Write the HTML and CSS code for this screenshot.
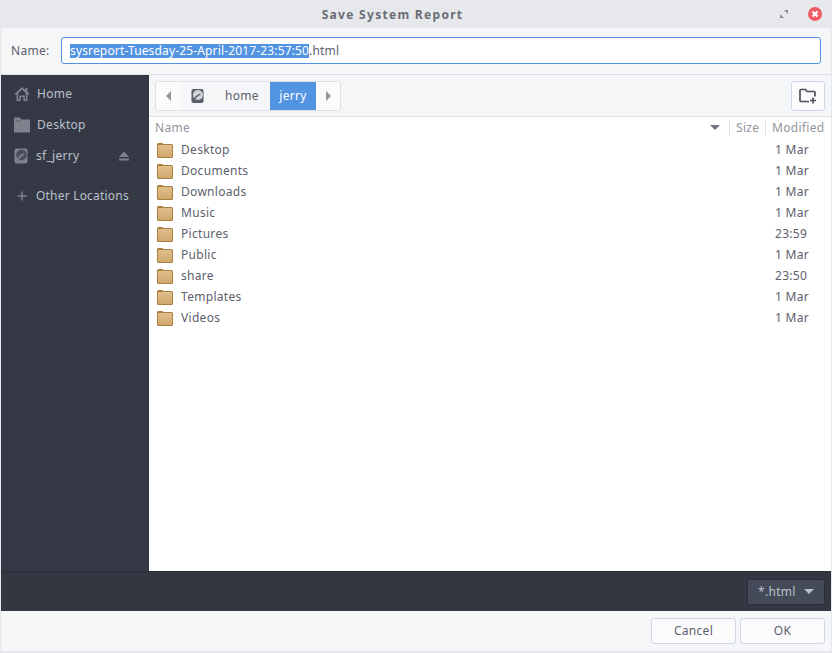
FILE: index.html
```html
<!doctype html>
<html>

<head>
	<meta charset="utf-8">
	<link rel="stylesheet" href="styles.css">
	<title>Save System Report</title>
</head>

<body>
	<svg class="defs" width="0" height="0">
		<linearGradient id="fold" x1="0" y1="0" x2="0" y2="1">
			<stop offset="0" stop-color="#e0bf8c" />
			<stop offset="1" stop-color="#d0a86f" />
		</linearGradient>
		<symbol id="folder" viewBox="0 0 18 18">
			<path d="M1 3.500q0-1.500 1.500-1.500h4l1 1h8q1.500 0 1.500 1.500v11q0 1.500-1.500 1.500h-13q-1.500 0-1.500-1.500z" fill="#a9803f" />
			<rect x="2" y="4" width="14" height="12" rx="1" fill="url(#fold)" />
		</symbol>
		<symbol id="disk" viewBox="0 0 14 16">
			<rect x="0.500" y="0.500" width="13" height="15" rx="2" class="disk-case" />
			<circle cx="7.500" cy="7" r="5.400" class="disk-plate" />
			<path d="M2.500 14.500q1.500-6 7.500-8.500" stroke-width="1.600" fill="none" class="disk-arm" />
		</symbol>
	</svg>
	<div class="window">
		<div class="titlebar">
			<span class="title">Save System Report</span>
			<svg class="restore" width="8" height="8" viewBox="0 0 8 8">
				<path d="M4 0h4v4zM0 4l4 4h-4z" fill="#8b8e95" />
			</svg>
			<span class="close">
				<svg width="14" height="14" viewBox="0 0 14 14">
					<circle cx="7" cy="7" r="7" fill="#ef5b62" />
					<path d="M4.500 4.500l5 5M9.500 4.500l-5 5" stroke="#fff" stroke-width="2.200" />
				</svg>
			</span>
		</div>

		<div class="namerow">
			<label class="namelabel">Name:</label>
			<div class="nameinput"><span class="sel">sysreport-Tuesday-25-April-2017-23:57:50</span>.html</div>
		</div>

		<div class="main">
			<div class="sidebar">
				<div class="place">
					<svg class="picon" width="16" height="16" viewBox="0 0 16 16">
						<path d="M8 1L0 8.500h2.500V15h4.200v-4h2.600v4h4.200V8.500H16l-2.500-2.400V2h-2.200v2z M8 3.500l3.800 3.700V13.500h-1V9.500H5.200v4h-1V7.200z" fill="#7d828d" fill-rule="evenodd" />
					</svg>
					<span>Home</span>
				</div>
				<div class="place">
					<svg class="picon" width="16" height="16" viewBox="0 0 16 16">
						<path d="M0 0.500h6l1.500 2H16v13H0z" fill="#7d828d" />
						<path d="M1.500 3.500h5.500v1H1.500z" fill="#565b67" />
					</svg>
					<span>Desktop</span>
				</div>
				<div class="place">
					<svg class="picon disk-side" width="14" height="16">
						<use href="#disk" />
					</svg>
					<span class="grow">sf_jerry</span>
					<svg class="eject" width="10" height="10" viewBox="0 0 10 10">
						<path d="M5 .5L10 6H0zM0 7.500h10V9.500H0z" fill="#7d828d" />
					</svg>
				</div>
				<div class="place other">
					<svg class="picon" width="16" height="16" viewBox="0 0 16 16">
						<path d="M3.500 8h9M8 3.500v9" stroke="#7d828d" stroke-width="1.500" />
					</svg>
					<span>Other Locations</span>
				</div>
			</div>

			<div class="content">
				<div class="pathrow">
					<div class="pathbar">
						<span class="arrow"><i class="tri-left"></i></span>
						<span class="crumb crumb-root"><svg width="13" height="16"><use href="#disk" /></svg></span>
						<span class="crumb crumb-home">home</span>
						<span class="crumb crumb-on">jerry</span>
						<span class="arrow"><i class="tri-right"></i></span>
					</div>
					<button class="newfolder">
						<svg width="18" height="16" viewBox="0 0 18 16">
							<path d="M10 13.500H2q-1 0-1-1V2.500q0-1 1-1h4.500l1.500 2h7q1 0 1 1v4" fill="none" stroke="#4d515c" stroke-width="1.700" />
							<path d="M14 9.500v6M11 12.500h6" stroke="#4d515c" stroke-width="1.700" />
						</svg>
					</button>
				</div>

				<div class="listhead">
					<span class="col-name">Name</span>
					<i class="tri-sort"></i>
					<span class="col-size">Size</span>
					<span class="col-mod">Modified</span>
				</div>

				<div class="list">
					<div class="row"><svg class="folder"><use href="#folder" /></svg><span class="fname">Desktop</span><span class="fdate">1 Mar</span></div>
					<div class="row"><svg class="folder"><use href="#folder" /></svg><span class="fname">Documents</span><span class="fdate">1 Mar</span></div>
					<div class="row"><svg class="folder"><use href="#folder" /></svg><span class="fname">Downloads</span><span class="fdate">1 Mar</span></div>
					<div class="row"><svg class="folder"><use href="#folder" /></svg><span class="fname">Music</span><span class="fdate">1 Mar</span></div>
					<div class="row"><svg class="folder"><use href="#folder" /></svg><span class="fname">Pictures</span><span class="fdate">23:59</span></div>
					<div class="row"><svg class="folder"><use href="#folder" /></svg><span class="fname">Public</span><span class="fdate">1 Mar</span></div>
					<div class="row"><svg class="folder"><use href="#folder" /></svg><span class="fname">share</span><span class="fdate">23:50</span></div>
					<div class="row"><svg class="folder"><use href="#folder" /></svg><span class="fname">Templates</span><span class="fdate">1 Mar</span></div>
					<div class="row"><svg class="folder"><use href="#folder" /></svg><span class="fname">Videos</span><span class="fdate">1 Mar</span></div>
				</div>
			</div>
		</div>

		<div class="filterbar">
			<button class="filter">*.html<i class="tri-down"></i></button>
		</div>

		<div class="actions">
			<button class="btn btn-cancel">Cancel</button>
			<button class="btn btn-ok">OK</button>
		</div>
	</div>
</body>

</html>
```

FILE: styles.css
```css
html,
body {
	margin: 0;
	padding: 0;
	background: #e7e8eb;
}

body {
	width: 832px;
	height: 653px;
	overflow: hidden;
	font-family: "Noto Sans", "Open Sans", sans-serif;
	font-size: 12px;
	letter-spacing: 0.3px;
	color: #5c616c;
	--disk-a: #5c616c;
	--disk-b: #d0d2d6;
}

.defs {
	position: absolute;
}

.disk-case {
	fill: var(--disk-a);
}

.disk-plate {
	fill: var(--disk-b);
}

.disk-arm {
	stroke: var(--disk-a);
}

.disk-side {
	--disk-a: #7d828d;
	--disk-b: #4a4e5a;
}

.window {
	display: flex;
	flex-direction: column;
	height: 651px;
	padding: 0 1px;
	box-sizing: border-box;
}

.titlebar {
	flex: 0 0 28px;
	display: flex;
	align-items: center;
	justify-content: center;
	position: relative;
	background: #e7e8eb;
	margin: 0 -1px;
}

.title {
	font-weight: bold;
	letter-spacing: 1.3px;
	color: #696d76;
	padding-right: 47px;
}

.restore {
	position: absolute;
	left: 780px;
	top: 10px;
}

.close {
	position: absolute;
	left: 808px;
	top: 7px;
	height: 14px;
}

.namerow {
	flex: 0 0 47px;
	display: flex;
	align-items: center;
	box-sizing: border-box;
	padding: 0 10px 1px 10px;
	background: #f5f6f7;
	border-bottom: 1px solid #dcdfe3;
}

.namelabel {
	width: 50px;
	flex: none;
}

.nameinput {
	flex: 1;
	height: 27px;
	box-sizing: border-box;
	padding-left: 8px;
	line-height: 25px;
	letter-spacing: 0.15px;
	background: #fff;
	border: 1px solid #5294e2;
	border-radius: 3px;
	white-space: nowrap;
}

.sel {
	display: inline-block;
	height: 14px;
	line-height: 14px;
	background: #5294e2;
	color: #fff;
}

.main {
	flex: 1;
	display: flex;
	min-height: 0;
}

.sidebar {
	flex: 0 0 148px;
	min-width: 0;
	background: #353945;
	padding-top: 3px;
	color: #bac0ca;
}

.place {
	height: 31px;
	display: flex;
	align-items: center;
	padding: 0 20px 0 13px;
	white-space: nowrap;
}

.place.other {
	margin-top: 9px;
	letter-spacing: 0.2px;
}

.place.other .picon {
	margin-right: 6px;
}

.picon {
	flex: none;
	margin-right: 7px;
}

.grow {
	flex: 1;
	padding-left: 1px;
}

.eject {
	flex: none;
}

.content {
	flex: 1;
	display: flex;
	flex-direction: column;
	min-width: 0;
	background: #fff;
}

.pathrow {
	flex: 0 0 42px;
	display: flex;
	align-items: center;
	justify-content: space-between;
	box-sizing: border-box;
	padding: 0 6px;
	background: #f5f6f7;
	border-bottom: 1px solid #dcdfe3;
}

.pathbar {
	display: flex;
	height: 30px;
	box-sizing: border-box;
	border: 1px solid #dfe2e8;
	border-radius: 3px;
	background: #fbfbfc;
	overflow: hidden;
}

.arrow {
	width: 24px;
	display: flex;
	align-items: center;
	justify-content: center;
}

.tri-left {
	border: 5px solid transparent;
	border-left: 0;
	border-right: 5px solid #8f939b;
}

.tri-right {
	border: 5px solid transparent;
	border-right: 0;
	border-left: 5px solid #8f939b;
}

.crumb {
	display: flex;
	align-items: center;
	justify-content: center;
	background: #fbfbfc;
}

.crumb-root {
	width: 34px;
	background: #f5f6f7;
}

.crumb-home {
	width: 56px;
	background: #f5f6f7;
}

.crumb-on {
	width: 46px;
	background: #5294e2;
	color: #fff;
}

.newfolder {
	width: 34px;
	height: 30px;
	padding: 0;
	display: flex;
	align-items: center;
	justify-content: center;
	background: #fbfbfc;
	border: 1px solid #cfd6e6;
	border-radius: 3px;
}

.listhead {
	flex: 0 0 22px;
	display: flex;
	align-items: center;
	box-sizing: border-box;
	padding: 0 0 1px 6px;
	line-height: 14px;
	color: #92959d;
}

.col-name {
	flex: 1;
}

.tri-sort {
	border: 5px solid transparent;
	border-bottom: 0;
	border-top: 5px solid #70747e;
	margin-right: 9px;
}

.col-size {
	width: 36px;
	box-sizing: border-box;
	padding-left: 6px;
	border-left: 1px solid #dcdfe3;
}

.col-mod {
	width: 66px;
	box-sizing: border-box;
	padding-left: 6px;
	border-left: 1px solid #dcdfe3;
}

.list {
	flex: 1;
}

.row {
	height: 21px;
	display: flex;
	align-items: center;
	padding-left: 7px;
}

.folder {
	width: 18px;
	height: 18px;
	flex: none;
	margin-right: 7px;
}

.fname {
	flex: 1;
}

.fdate {
	width: 56px;
	flex: none;
}

.filterbar {
	flex: 0 0 40px;
	display: flex;
	align-items: center;
	justify-content: flex-end;
	box-sizing: border-box;
	padding-right: 6px;
	background: #333741;
	border-top: 1px solid #2b2e37;
}

.filter {
	width: 78px;
	height: 26px;
	padding: 0 0 0 10px;
	display: flex;
	align-items: center;
	justify-content: space-between;
	font: inherit;
	letter-spacing: inherit;
	color: #bac0ca;
	background: #444a58;
	border: 1px solid #2b2e37;
	border-radius: 3px;
}

.tri-down {
	border: 5px solid transparent;
	border-bottom: 0;
	border-top: 5px solid #bac0ca;
	margin-right: 10px;
}

.actions {
	flex: 0 0 40px;
	display: flex;
	align-items: center;
	justify-content: flex-end;
	gap: 4px;
	box-sizing: border-box;
	padding: 0 6px 1px 0;
	background: #f5f6f7;
}

.btn {
	width: 85px;
	height: 26px;
	padding: 0;
	font: inherit;
	letter-spacing: inherit;
	color: #5c616c;
	background: #fbfbfc;
	border: 1px solid #cfd6e6;
	border-radius: 3px;
}
```
